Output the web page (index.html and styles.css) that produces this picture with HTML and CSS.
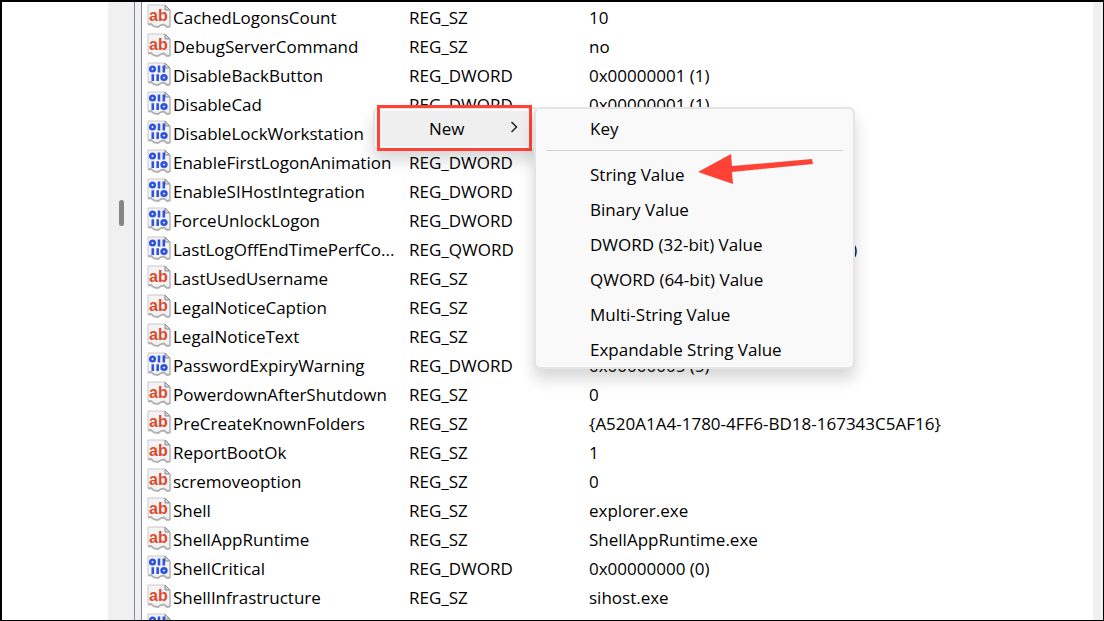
FILE: index.html
```html
<!DOCTYPE html>
<html lang="en">
<head>
    <meta charset="UTF-8">
    <meta name="viewport" content="width=device-width, initial-scale=1.0">
    <title>Registry Editor</title>
    <link rel="stylesheet" href="styles.css">
</head>
<body>
    <!-- Shared icons -->
    <svg class="sprite" aria-hidden="true">
        <symbol id="page" viewBox="0 0 24 24">
            <path d="M1 1H18L23 6V23L20 24L17 21L14 22L11 24L7 23L4 20L1 21Z" fill="#f3f3f5"/>
            <path d="M1 20V1H18" fill="none" stroke="#c9c9cc"/>
            <path d="M18 1V6H23Z" fill="#d5d5d5" stroke="#8e8e8e"/>
            <path d="M23 6V23" fill="none" stroke="#b4b4b4" stroke-width="1.5"/>
            <path d="M1 20.5L4 20L7 22.5L11 23L14 21L17 20.5L20 23L23 22.5" fill="none" stroke="#b0b0b0" stroke-width="1.8"/>
        </symbol>
        <symbol id="string" viewBox="0 0 24 24">
            <use href="#page"/>
            <text class="icon-text" x="2" y="17">ab</text>
        </symbol>
        <symbol id="binary" viewBox="0 0 24 24">
            <use href="#page"/>
            <g fill="none" stroke="#2f55dd" stroke-width="2.6">
                <ellipse cx="5.5" cy="7" rx="2.3" ry="2.2"/>
                <path d="M12 3.6V10.4M16.8 3.6V10.4M5.8 12.2V19M10.7 12.2V19"/>
                <ellipse cx="17" cy="15.6" rx="2.4" ry="2.2"/>
            </g>
        </symbol>
    </svg>

    <main class="window">
        <div class="tree-pane"></div>
        <div class="scroll-track tree-scroll"><div class="scroll-thumb"></div></div>
        <div class="splitter"></div>
        <div class="list-pane">
            <table class="values">
                <colgroup>
                    <col class="col-name">
                    <col class="col-type">
                    <col>
                </colgroup>
                <tbody>
                    <tr><td><svg class="icon"><use href="#string"/></svg>CachedLogonsCount</td><td>REG_SZ</td><td>10</td></tr>
                    <tr><td><svg class="icon"><use href="#string"/></svg>DebugServerCommand</td><td>REG_SZ</td><td>no</td></tr>
                    <tr><td><svg class="icon"><use href="#binary"/></svg>DisableBackButton</td><td>REG_DWORD</td><td>0x00000001 (1)</td></tr>
                    <tr><td><svg class="icon"><use href="#binary"/></svg>DisableCad</td><td>REG_DWORD</td><td>0x00000001 (1)</td></tr>
                    <tr><td><svg class="icon"><use href="#binary"/></svg>DisableLockWorkstation</td><td>REG_DWORD</td><td>0x00000000 (0)</td></tr>
                    <tr><td><svg class="icon"><use href="#binary"/></svg>EnableFirstLogonAnimation</td><td>REG_DWORD</td><td>0x00000001 (1)</td></tr>
                    <tr><td><svg class="icon"><use href="#binary"/></svg>EnableSIHostIntegration</td><td>REG_DWORD</td><td>0x00000001 (1)</td></tr>
                    <tr><td><svg class="icon"><use href="#binary"/></svg>ForceUnlockLogon</td><td>REG_DWORD</td><td>0x00000000 (0)</td></tr>
                    <tr><td><svg class="icon"><use href="#binary"/></svg>LastLogOffEndTimePerfCo...</td><td>REG_QWORD</td><td>0x4e8bfaf5178 (53976405323448)</td></tr>
                    <tr><td><svg class="icon"><use href="#string"/></svg>LastUsedUsername</td><td>REG_SZ</td><td></td></tr>
                    <tr><td><svg class="icon"><use href="#string"/></svg>LegalNoticeCaption</td><td>REG_SZ</td><td></td></tr>
                    <tr><td><svg class="icon"><use href="#string"/></svg>LegalNoticeText</td><td>REG_SZ</td><td></td></tr>
                    <tr><td><svg class="icon"><use href="#binary"/></svg>PasswordExpiryWarning</td><td>REG_DWORD</td><td>0x00000005 (5)</td></tr>
                    <tr><td><svg class="icon"><use href="#string"/></svg>PowerdownAfterShutdown</td><td>REG_SZ</td><td>0</td></tr>
                    <tr><td><svg class="icon"><use href="#string"/></svg>PreCreateKnownFolders</td><td>REG_SZ</td><td>{A520A1A4-1780-4FF6-BD18-167343C5AF16}</td></tr>
                    <tr><td><svg class="icon"><use href="#string"/></svg>ReportBootOk</td><td>REG_SZ</td><td>1</td></tr>
                    <tr><td><svg class="icon"><use href="#string"/></svg>scremoveoption</td><td>REG_SZ</td><td>0</td></tr>
                    <tr><td><svg class="icon"><use href="#string"/></svg>Shell</td><td>REG_SZ</td><td>explorer.exe</td></tr>
                    <tr><td><svg class="icon"><use href="#string"/></svg>ShellAppRuntime</td><td>REG_SZ</td><td>ShellAppRuntime.exe</td></tr>
                    <tr><td><svg class="icon"><use href="#binary"/></svg>ShellCritical</td><td>REG_DWORD</td><td>0x00000000 (0)</td></tr>
                    <tr><td><svg class="icon"><use href="#string"/></svg>ShellInfrastructure</td><td>REG_SZ</td><td>sihost.exe</td></tr>
                    <tr><td><svg class="icon"><use href="#binary"/></svg>SiHostCritical</td><td>REG_DWORD</td><td>0x00000000 (0)</td></tr>
                </tbody>
            </table>
        </div>
        <div class="scroll-track list-scroll"></div>

        <div class="menu context-menu">
            <button type="button" class="menu-item has-submenu">
                New
                <svg class="chevron" viewBox="0 0 8 12"><path d="M1.5 1L6.5 6L1.5 11"/></svg>
            </button>
        </div>
        <div class="highlight"></div>

        <div class="menu submenu">
            <button type="button" class="menu-item">Key</button>
            <hr>
            <button type="button" class="menu-item">String Value</button>
            <button type="button" class="menu-item">Binary Value</button>
            <button type="button" class="menu-item">DWORD (32-bit) Value</button>
            <button type="button" class="menu-item">QWORD (64-bit) Value</button>
            <button type="button" class="menu-item">Multi-String Value</button>
            <button type="button" class="menu-item">Expandable String Value</button>
        </div>

        <svg class="arrow" viewBox="0 0 116 32" aria-hidden="true">
            <path d="M0 18L33 0L34 12L114 5L115 10L34 18L35 30Z"/>
        </svg>
    </main>
</body>
</html>
```
FILE: styles.css
```css
* {
    box-sizing: border-box;
}

body {
    margin: 0;
    font-family: "Open Sans", "Noto Sans", sans-serif;
    font-size: 17px;
    line-height: 29px;
    color: #000;
    background: #fff;
}

.sprite {
    position: absolute;
    width: 0;
    height: 0;
}

.window {
    position: relative;
    display: flex;
    height: 100vh;
    overflow: hidden;
    border: solid #000;
    border-width: 2px 1px 1px 2px;
}

.tree-pane {
    flex: 0 0 106px;
}

.scroll-track {
    background: #f0f0f0;
}

.tree-scroll {
    display: flex;
    flex: 0 0 26px;
    justify-content: center;
}

.scroll-thumb {
    width: 5px;
    height: 26px;
    margin-top: 198px;
    border-radius: 3px;
    background: #858585;
}

.list-scroll {
    flex: 0 0 10px;
}

.splitter {
    flex: 0 0 8px;
    border: solid #828790;
    border-width: 0 1px;
    background: #f0f0f0;
}

.list-pane {
    flex: 1;
    min-width: 0;
    overflow: hidden;
    padding: 1px 0 0 5px;
}

/* Registry values */
.values {
    width: 100%;
    table-layout: fixed;
    border-collapse: collapse;
}

.col-name {
    width: 262px;
}

.col-type {
    width: 180px;
}

.values td {
    height: 29px;
    padding: 0;
    white-space: nowrap;
}

.icon {
    float: left;
    width: 24px;
    height: 24px;
    margin: 1px 2px 0 0;
}

.icon-text {
    font: bold 16px "Liberation Sans", sans-serif;
    fill: #dc4a2b;
}

/* Menus */
.menu {
    position: absolute;
    border: 2px solid #e4e4e4;
    border-radius: 6px;
    background: #f9f9f9;
    box-shadow: 0 10px 16px rgba(0, 0, 0, 0.16);
}

.context-menu {
    top: 105px;
    left: 371px;
    width: 166px;
    padding: 2px 3px;
}

.submenu {
    top: 105px;
    left: 532px;
    width: 321px;
    padding-top: 2px;
}

.menu-item {
    display: flex;
    align-items: center;
    justify-content: space-between;
    width: 100%;
    height: 35px;
    padding: 0 0 0 54px;
    border: 0;
    background: none;
    color: inherit;
    font: inherit;
    text-align: left;
}

.menu-item:hover {
    background: #efefef;
}

.has-submenu {
    padding: 0 16px 0 51px;
    border-radius: 4px;
    background: #efefef;
}

.chevron {
    width: 8px;
    height: 12px;
    margin-bottom: 4px;
    fill: none;
    stroke: #222;
    stroke-width: 1.5;
}

.menu hr {
    height: 1px;
    margin: 4px 10px 6px;
    border: 0;
    background: #d2d2d2;
}

/* Annotations */
.highlight {
    position: absolute;
    top: 103px;
    left: 375px;
    width: 155px;
    height: 46px;
    border: 3px solid #ff4136;
}

.arrow {
    position: absolute;
    top: 152px;
    left: 696px;
    width: 116px;
    height: 32px;
    fill: #ff4136;
}
```
